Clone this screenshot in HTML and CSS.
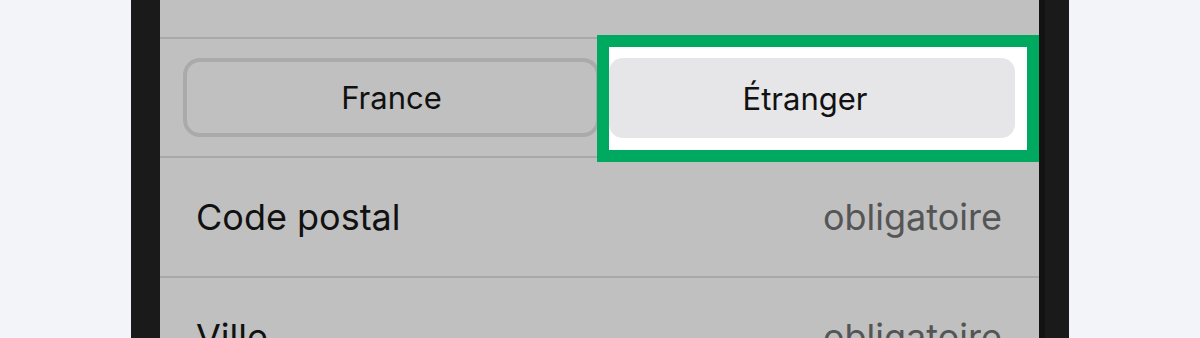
FILE: index.html
```html
<!DOCTYPE html>
<html lang="fr">
<head>
    <meta charset="UTF-8">
    <meta name="viewport" content="width=device-width, initial-scale=1.0">
    <title>Adresse</title>
    <link rel="stylesheet" href="styles.css">
</head>
<body>
    <div class="device">
        <div class="bezel-left"></div>
        <div class="screen">
            <!-- Previous row (cut off) -->
            <div class="row-top"></div>

            <!-- Country choice -->
            <div class="segment">
                <button class="seg-btn">France</button>
                <button class="seg-btn selected">Étranger</button>
                <div class="focus-ring"></div>
            </div>

            <!-- Form fields -->
            <div class="field">
                <span class="label">Code postal</span>
                <span class="hint">obligatoire</span>
            </div>
            <div class="field">
                <span class="label">Ville</span>
                <span class="hint">obligatoire</span>
            </div>
        </div>
        <div class="bezel-right"><div class="edge"></div></div>
    </div>
</body>
</html>
```

FILE: styles.css
```css
body {
    margin: 0;
    padding: 0;
    background-color: #f2f4f9;
    font-family: Inter, "Noto Sans", sans-serif;
    height: 338px;
    overflow: hidden;
}

.device {
    display: flex;
    width: 938px;
    height: 338px;
    margin-left: 131px;
}

.bezel-left {
    width: 29px;
    background-color: #1a1a1a;
}

.bezel-right {
    width: 30px;
    background-color: #1a1a1a;
}

.bezel-right .edge {
    width: 6px;
    height: 100%;
    background-color: #121212;
}

.screen {
    flex: 1;
    background-color: #c0c0c0;
    overflow: hidden;
}

.row-top {
    height: 37px;
    border-bottom: 2px solid #a9a9a9;
}

.segment {
    position: relative;
    display: grid;
    grid-template-columns: 417px 406px;
    gap: 9px;
    padding: 19px 24px 18px 23px;
    border-bottom: 2px solid #a9a9a9;
}

.seg-btn {
    height: 79px;
    margin: 0;
    padding: 0;
    font-family: inherit;
    font-size: 31px;
    color: #111;
    background-color: transparent;
    border: 4px solid #aaaaaa;
    border-radius: 17px;
}

.seg-btn.selected {
    position: relative;
    z-index: 2;
    height: 80px;
    padding-right: 14px;
    border: none;
    border-radius: 14px;
    background-color: #e6e6e8;
}

/* focus highlight around the selected option */
.focus-ring {
    position: absolute;
    left: 437px;
    top: -4px;
    width: 418px;
    height: 103px;
    background-color: #ffffff;
    border: 12px solid #00a960;
    z-index: 1;
}

.field {
    height: 118px;
    padding: 0 37px 0 36px;
    display: flex;
    align-items: center;
    justify-content: space-between;
    border-bottom: 2px solid #a9a9a9;
}

.label {
    font-size: 36px;
    color: #111;
}

.hint {
    font-size: 36px;
    color: #555;
}
```
